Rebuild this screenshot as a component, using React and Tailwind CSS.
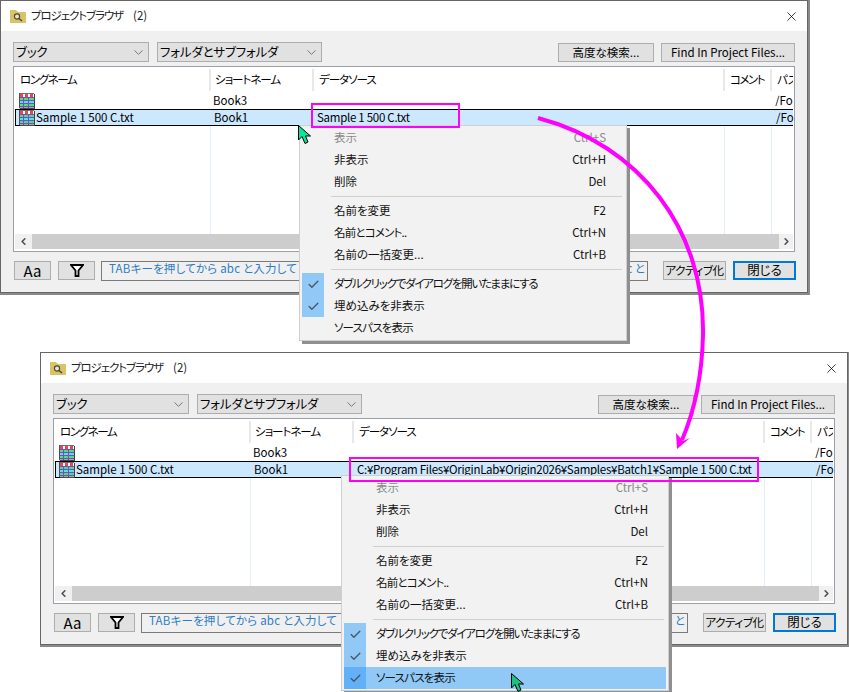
import { Check, ChevronDown, ChevronLeft, ChevronRight, X } from "lucide-react";

const GRID = "grid grid-cols-[196px_103px_411px_47px_21px]";

const MENU_GROUPS = [
  [
    { label: "表示", keys: "Ctrl+S", disabled: true },
    { label: "非表示", keys: "Ctrl+H" },
    { label: "削除", keys: "Del" },
  ],
  [
    { label: "名前を変更", keys: "F2" },
    { label: "名前とコメント..", keys: "Ctrl+N", tight: "tracking-[-0.8px]" },
    { label: "名前の一括変更...", keys: "Ctrl+B" },
  ],
];

// Small worksheet icon next to the long name
function BookIcon() {
  return (
    <svg width="16" height="16" viewBox="0 0 16 16" className="shrink-0">
      <rect x="1" y="1" width="15" height="15" fill="#404040" />
      <rect x="0" y="0" width="15" height="15" fill="#ffffff" />
      <rect x="0" y="0" width="15" height="1" fill="#707070" />
      <rect x="1" y="1" width="3" height="3" fill="#f04060" />
      <rect x="6" y="1" width="3" height="3" fill="#f04060" />
      <rect x="11" y="1" width="3" height="3" fill="#f04060" />
      <rect x="0" y="4" width="15" height="3" fill="#50e070" />
      <rect x="0" y="8" width="15" height="2" fill="#60d8f0" />
      <rect x="0" y="11" width="15" height="3" fill="#50e070" />
      <path d="M0 4.5H15M0 7.5H15M0 10.5H15M0 13.5H15M4.5 4V15M9.5 4V15" stroke="#7050c8" strokeWidth="1" />
      <path d="M0.5 0V15H15" stroke="#505050" fill="none" />
    </svg>
  );
}

function FolderIcon() {
  return (
    <svg width="16" height="14" viewBox="0 0 16 14" className="shrink-0">
      <path d="M0 1H6L8 3H16V14H0Z" fill="#d8c468" />
      <circle cx="7" cy="7.5" r="2.6" fill="#efe6b8" stroke="#4a4a3a" strokeWidth="1.2" />
      <path d="M9 9.5L12 12" stroke="#4a4a3a" strokeWidth="1.6" />
    </svg>
  );
}

function FunnelIcon() {
  return (
    <svg width="14" height="13" viewBox="0 0 14 13">
      <path d="M1 1H13L8.5 6.5V12H5.5V6.5Z" fill="#ffffff" stroke="#000000" strokeWidth="1.8" />
    </svg>
  );
}

function Cursor({ className, fill }) {
  return (
    <svg width="14" height="20" viewBox="0 0 14 20" className={className}>
      <path d="M0.5 0.5V15L4 11.5L7 18.5L10 17L7.5 11H12.5Z" fill={fill} stroke="#000000" strokeWidth="1" />
    </svg>
  );
}

function Combo({ label, className }) {
  return (
    <div className={`flex h-5 items-center justify-between border border-[#adadad] bg-[#e1e1e1] px-[2px] text-[12.5px] leading-none tracking-[-0.2px] ${className}`}>
      <span>{label}</span>
      <ChevronDown size={15} strokeWidth={1.2} color="#555555" />
    </div>
  );
}

function Button({ children, className }) {
  return (
    <div className={`flex h-[19px] items-center justify-center whitespace-nowrap border bg-[#e1e1e1] leading-none ${className}`}>
      {children}
    </div>
  );
}

function ProjectWindow({ source, className }) {
  return (
    <div className={`absolute flex h-[293px] w-[808px] flex-col border border-[#666666] bg-[#f0f0f0] text-[11.5px] shadow-[1px_1px_0_1px_#8a8a8a] ${className}`}>
      {/* Title bar */}
      <div className="flex h-[30px] shrink-0 items-center bg-white pl-[9px] pr-[8px] text-[#222222]">
        <FolderIcon />
        <span className="ml-[5px] tracking-[-1.1px]">プロジェクトブラウザ</span>
        <span className="ml-[10px]">(2)</span>
        <X size={15} strokeWidth={1.2} color="#000000" className="ml-auto" />
      </div>

      {/* Filter row */}
      <div className="mt-[11px] flex items-start px-[12px]">
        <Combo label="ブック" className="w-[136px]" />
        <Combo label="フォルダとサブフォルダ" className="ml-2 w-[165px]" />
        <Button className="ml-[236px] mt-px w-[96px] border-[#adadad]">高度な検索...</Button>
        <Button className="ml-[7px] mt-px w-[134px] border-[#adadad]">Find In Project Files...</Button>
      </div>

      {/* List */}
      <div className="ml-[12px] mt-[4px] flex h-[186px] w-[782px] flex-col overflow-hidden border border-[#9a9fa8] bg-white p-px leading-none">
        <div className={`${GRID} h-[24px] shrink-0`}>
          <div className="my-px flex items-center border-r-2 border-[#e8e8e8] pl-[5px] tracking-[-1.4px]">ロングネーム</div>
          <div className="my-px flex items-center border-r-2 border-[#e8e8e8] pl-[4px] tracking-[-1px]">ショートネーム</div>
          <div className="my-px flex items-center border-r-2 border-[#e8e8e8] pl-[5px] tracking-[-1px]">データソース</div>
          <div className="my-px flex items-center whitespace-nowrap border-r-2 border-[#e8e8e8] pl-[5px] tracking-[-1.5px]">コメント</div>
          <div className="my-px flex items-center overflow-hidden whitespace-nowrap pl-[5px]">パス</div>
        </div>
        <div className={`${GRID} h-[17px] shrink-0 items-center`}>
          <div className="pl-[4px]"><BookIcon /></div>
          <div className="pl-[2px]">Book3</div>
          <div />
          <div />
          <div className="overflow-hidden whitespace-nowrap pl-[3px]">/Folder1/</div>
        </div>
        <div className={`${GRID} h-[17px] shrink-0 items-center border-y border-l border-black bg-[#cce8ff]`}>
          <div className="flex items-center gap-[1px] pl-[3px]"><BookIcon /><span>Sample 1 500 C.txt</span></div>
          <div className="pl-[2px]">Book1</div>
          <div className="whitespace-nowrap pl-[2px] tracking-[-0.28px]">{source}</div>
          <div />
          <div className="overflow-hidden whitespace-nowrap pl-[3px]">/Folder1/</div>
        </div>
        <div className={`${GRID} min-h-0 flex-1`}>
          <div className="border-r border-[#e3eefa]" />
          <div className="border-r border-[#e3eefa]" />
          <div className="border-r border-[#e3eefa]" />
          <div className="border-r border-[#e3eefa]" />
          <div />
        </div>
        {/* Scrollbar */}
        <div className="mb-px flex h-[15px] shrink-0 items-center justify-between bg-[#cdcdcd]">
          <div className="flex h-full w-[17px] items-center justify-center bg-[#f0f0f0]">
            <ChevronLeft size={11} strokeWidth={3.5} color="#505050" />
          </div>
          <div className="flex h-full w-[14px] items-center justify-center bg-[#f0f0f0]">
            <ChevronRight size={11} strokeWidth={3.5} color="#505050" />
          </div>
        </div>
      </div>

      {/* Bottom row */}
      <div className="mt-[9px] flex items-start pl-[13px]">
        <Button className="w-[37px] border-[#adadad] text-[15px]">Aa</Button>
        <Button className="ml-[7px] w-[37px] border-[#adadad]"><FunnelIcon /></Button>
        <div className="ml-[6px] flex h-5 w-[547px] justify-between border border-[#7a7a7a] pl-[7px] pr-[2px] leading-[12px] text-[#2f7cc0]">
          <span className="tracking-[0.2px]">TABキーを押してから abc と入力して</span>
          <span>abc と</span>
        </div>
        <Button className="ml-[15px] w-[63px] border-[#adadad] tracking-[-0.4px]">アクティブ化</Button>
        <Button className="ml-[7px] w-[63px] border-2 border-[#0078d7] text-[12.5px]">閉じる</Button>
      </div>
    </div>
  );
}

function MenuRow({ label, keys, disabled, tight }) {
  return (
    <div className={`flex h-[22px] items-center pl-[32px] pr-[18px] ${disabled ? "text-[#8a8a8a]" : ""}`}>
      <span className={tight}>{label}</span>
      <span className="ml-auto">{keys}</span>
    </div>
  );
}

function CheckRow({ label, checked, active, tight }) {
  return (
    <div className={`flex h-[22px] items-center ${active ? "bg-[#90c8f6]" : ""}`}>
      <div className={`flex h-full w-[22px] items-center justify-center ${checked ? (active ? "bg-[#62b0f8]" : "bg-[#90c8f6]") : ""}`}>
        {checked && <Check size={13} strokeWidth={2.4} color="#4a5560" />}
      </div>
      <span className={`ml-[10px] ${tight}`}>{label}</span>
    </div>
  );
}

function ContextMenu({ lastChecked, className }) {
  return (
    <div className={`absolute w-[328px] border border-[#cfcfcf] bg-[#f2f2f2] px-[2px] py-px text-[11.5px] leading-none text-[#111111] shadow-[3px_3px_0_0_#8f8f8f] ${className}`}>
      {MENU_GROUPS.map((group) => (
        <div key={group[0].label}>
          {group.map((item) => (
            <MenuRow key={item.label} {...item} />
          ))}
          <div className="my-[3px] ml-[29px] mr-[2px] h-px bg-[#d0d0d0]" />
        </div>
      ))}
      <CheckRow label="ダブルクリックでダイアログを開いたままにする" checked tight="tracking-[-1.25px]" />
      <CheckRow label="埋め込みを非表示" checked />
      <CheckRow label="ソースパスを表示" checked={lastChecked} active={lastChecked} tight="tracking-[-0.8px]" />
    </div>
  );
}

function App() {
  return (
    <div className="relative h-[692px] w-[849px] overflow-hidden bg-white font-['Noto_Sans_CJK_JP','Liberation_Sans',sans-serif] text-black [font-feature-settings:'palt']">
      <ProjectWindow source="Sample 1 500 C.txt" className="left-0 top-0" />
      <ContextMenu className="left-[299px] top-[125px]" />
      <Cursor fill="#00e8a0" className="absolute left-[298px] top-[125px]" />
      <div className="absolute left-[311px] top-[103px] h-[25px] w-[149px] border-2 border-[#ff00ff]" />

      <ProjectWindow
        source="C:¥Program Files¥OriginLab¥Origin2026¥Samples¥Batch1¥Sample 1 500 C.txt"
        className="left-[40px] top-[352px]"
      />
      <ContextMenu lastChecked className="left-[341px] top-[475px]" />
      <Cursor fill="#20c080" className="absolute left-[511px] top-[673px]" />
      <div className="absolute left-[349px] top-[457px] h-[25px] w-[410px] border-2 border-[#ff00ff]" />

      {/* Arrow between the two dialogs */}
      <svg width="849" height="692" viewBox="0 0 849 692" className="pointer-events-none absolute left-0 top-0">
        <path d="M538 118C640 145 705 230 703 335C702 378 694 412 682 440" fill="none" stroke="#ff00ff" strokeWidth="4" />
        <path d="M677 449L676 433L683 441L690 438Z" fill="#ff00ff" />
      </svg>
    </div>
  );
}

export default App;
